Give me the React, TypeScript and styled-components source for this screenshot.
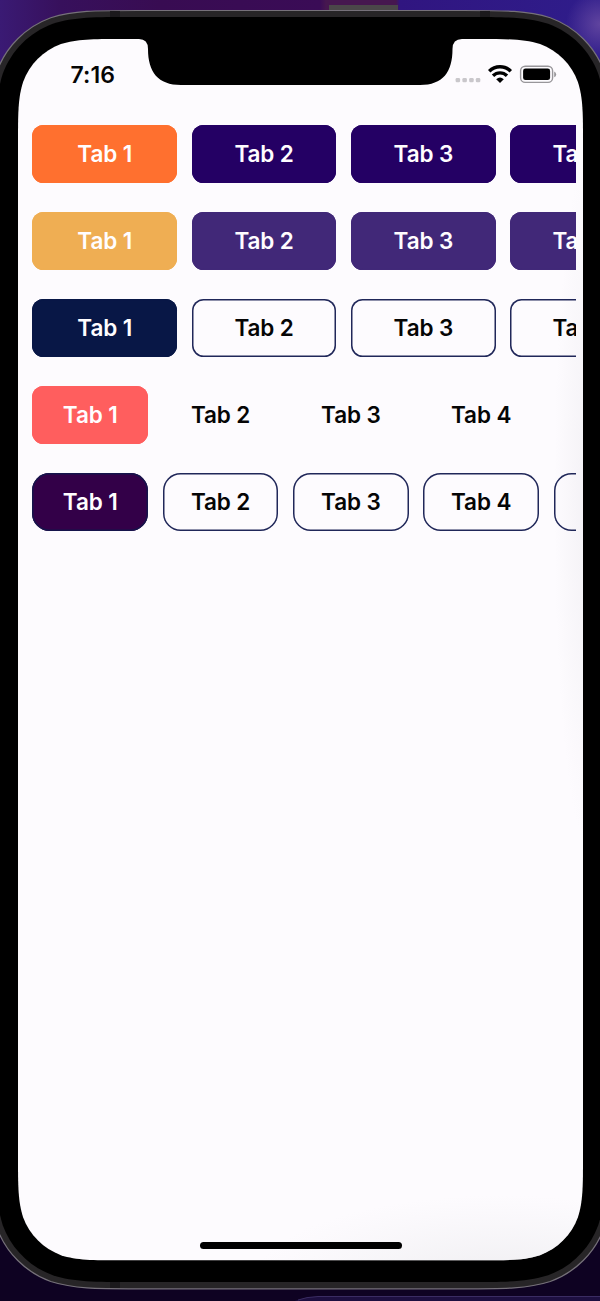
import React from "react";
import styled, { createGlobalStyle } from "styled-components";

const GlobalStyle = createGlobalStyle`
  * { box-sizing: border-box; }
  body { margin: 0; background: #0e0222; }
  button { font: inherit; }
`;

const Desktop = styled.main`
  position: relative;
  width: 600px;
  height: 1301px;
  overflow: hidden;
  padding: 39px 17px 0 18px;
  background:
    linear-gradient(#0e0222, #0e0222) 0 1150px / 100% 151px no-repeat,
    radial-gradient(circle at 600px 24px, #60449f 0, rgba(67, 41, 143, 0) 34px),
    linear-gradient(90deg, #3a1a74 0, #37105c 60px, #380c52 160px, #3a0c56 320px, #46174f 326px, #46174f 396px, #301580 400px, #2f1d8b 600px);
  font-family: Inter, "Liberation Sans", sans-serif;
`;

const Device = styled.svg`
  position: absolute;
  inset: 0;
  width: 600px;
  height: 1301px;
`;

const Screen = styled.section`
  position: relative;
  display: flex;
  flex-direction: column;
  height: 1221px;
`;

const StatusBar = styled.header`
  display: flex;
  align-items: center;
  justify-content: space-between;
  height: 46px;
  padding: 25px 26px 0 52.5px;
  flex: none;
`;

const Clock = styled.time`
  font-size: 23px;
  line-height: 24px;
  font-weight: 600;
  letter-spacing: 0.1px;
  color: #050505;
`;

const StatusIcons = styled.svg`
  width: 102px;
  height: 22px;
  flex: none;
`;

const TabRows = styled.div`
  display: flex;
  flex-direction: column;
  gap: 29px;
  padding: 40.4px 7.5px 0 14.4px;
`;

const Row = styled.nav`
  display: flex;
  gap: 14.5px;
  overflow: hidden;
  height: 58px;
`;

type Look = {
  $width: number;
  $fill: string;
  $ink: string;
  $border: string;
  $radius: number;
};

const Tab = styled.button<Look>`
  flex: none;
  width: ${(p) => p.$width}px;
  height: 58px;
  padding: 0;
  border: 0;
  box-shadow: inset 0 0 0 1.5px ${(p) => p.$border};
  border-radius: ${(p) => p.$radius}px;
  background: ${(p) => p.$fill};
  color: ${(p) => p.$ink};
  font-size: 22.5px;
  font-weight: 600;
  line-height: 28px;
  letter-spacing: -0.1px;
  white-space: nowrap;
`;

const HomeIndicator = styled.div`
  width: 202px;
  height: 7px;
  margin: auto auto 11px;
  border-radius: 4px;
  background: #000;
`;

// Continuous-curvature rounded rectangle.
function squircle(x0: number, y0: number, x1: number, y1: number, r: number) {
  const pts = [
    [1.52866, 0], [1.08849, 0], [0.8684, 0], [0.63149, 0.07491],
    [0.37282, 0.16905], [0.16905, 0.37282], [0.07491, 0.63149],
    [0, 0.8684], [0, 1.08849], [0, 1.52866],
  ];
  const corner = (cx: number, cy: number, sx: number, sy: number, reverse: boolean) => {
    const list = reverse ? [...pts].reverse() : pts;
    const p = list.map(([a, b]) => `${(cx + sx * a * r).toFixed(2)} ${(cy + sy * b * r).toFixed(2)}`);
    return `${p[0]} C${p.slice(1, 4).join(" ")} C${p.slice(4, 7).join(" ")} C${p.slice(7).join(" ")}`;
  };
  return `M${corner(x0, y0, 1, 1, true)} L${corner(x1, y0, -1, 1, false)} L${corner(x1, y1, -1, -1, true)} L${corner(x0, y1, 1, -1, false)} Z`;
}

function PhoneShell() {
  return (
    <Device viewBox="0 0 600 1301" aria-hidden="true">
      <defs>
        <radialGradient id="edge">
          <stop offset="0" stopColor="#f3f1f5" />
          <stop offset="1" stopColor="#f3f1f5" stopOpacity="0" />
        </radialGradient>
        <radialGradient id="foot">
          <stop offset="0" stopColor="#eeedf0" />
          <stop offset="1" stopColor="#f2f1f4" stopOpacity="0" />
        </radialGradient>
        <clipPath id="display">
          <path d={squircle(18, 39, 583, 1260.3, 68)} />
        </clipPath>
      </defs>
      <path d="M329 5 H398 V11 H329 Z" fill="#4b4749" />
      <path d="M292 1302 Q304 1297 318 1296.5 H600 V1301 H292Z" fill="#1d0f40" />
      <path d="M298 1300 Q306 1297 318 1296.5 H600" fill="none" stroke="#3a2c62" />
      <path d={squircle(-10.5, 10.5, 611.5, 1288.8, 97)} fill="#272527" stroke="#76717a" strokeWidth="1.2" />
      <path d="M110 11 h10 v6 h-10z M480 11 h10 v6 h-10z M110 1282 h10 v6 h-10z" fill="#1b191c" />
      <path d={squircle(-4, 17, 605, 1282, 90)} fill="#000" />
      <g clipPath="url(#display)">
        <rect x="18" y="39" width="565" height="1222" fill="#fdfbfe" />
        <ellipse cx="590" cy="500" rx="36" ry="350" fill="url(#edge)" />
        <ellipse cx="500" cy="1285" rx="250" ry="90" fill="url(#foot)" />
      </g>
      <path d="M139 38 V39 Q148 39 148 49 C148 72 158 85 181 85 H420 C443 85 452.5 72 452.5 49 Q452.5 39 462 39 V38 Z" fill="#000" />
    </Device>
  );
}

function SystemIcons() {
  return (
    <StatusIcons viewBox="0 0 102 22" aria-label="Wi-Fi and battery">
      <g fill="#c9c7cb">
        <rect x="0.6" y="13.9" width="4.5" height="4.3" rx="1.3" />
        <rect x="7.4" y="13.9" width="4.5" height="4.3" rx="1.3" />
        <rect x="14.2" y="13.9" width="4.5" height="4.3" rx="1.3" />
        <rect x="20.8" y="13.9" width="4.5" height="4.3" rx="1.3" />
      </g>
      <g fill="none" stroke="#000" strokeWidth="3.4">
        <path d="M34.2 7.3 C40.2 1.2 49.8 1.2 55.8 7.3" />
        <path d="M38 11.8 C42 7.9 48 7.9 52 11.8" />
      </g>
      <path d="M41.2 15.2 Q45 12 48.8 15.2 L45 19 Z" fill="#000" />
      <rect x="65.6" y="2.2" width="32" height="16.2" rx="4.6" fill="none" stroke="#98969a" strokeWidth="1.4" />
      <rect x="68.1" y="4.5" width="27" height="11.6" rx="2.4" fill="#000" />
      <path d="M99.2 7.5 Q101.2 8.4 101.2 10.4 Q101.2 12.4 99.2 13.2Z" fill="#98969a" />
    </StatusIcons>
  );
}

type RowTheme = {
  width: number;
  radius: number;
  active: string;
  activeBorder?: string;
  fill: string;
  border?: string;
  ink: string;
};

const rows: RowTheme[] = [
  { width: 144.8, radius: 11.5, active: "#ff702f", fill: "#240064", ink: "#fffdff" },
  { width: 144.8, radius: 11.5, active: "#efae53", fill: "#412878", ink: "#fffdff" },
  { width: 144.8, radius: 11.5, active: "#081746", fill: "transparent", border: "#202759", ink: "#050505" },
  { width: 115.8, radius: 11.5, active: "#ff5e5e", fill: "transparent", ink: "#050505" },
  { width: 115.8, radius: 17.5, active: "#330048", activeBorder: "#15144b", fill: "transparent", border: "#202759", ink: "#050505" },
];

export default function App() {
  return (
    <>
      <GlobalStyle />
      <Desktop>
        <PhoneShell />
        <Screen>
          <StatusBar>
            <Clock>7:16</Clock>
            <SystemIcons />
          </StatusBar>
          <TabRows>
            {rows.map((row, i) => (
              <Row key={i}>
                {(row.width > 120 ? [1, 2, 3, 4] : [1, 2, 3, 4, 5]).map((n) => (
                  <Tab
                    key={n}
                    $width={row.width}
                    $radius={row.radius}
                    $fill={n === 1 ? row.active : row.fill}
                    $border={n === 1 ? row.activeBorder ?? row.active : row.border ?? row.fill}
                    $ink={n === 1 ? "#fffdff" : row.ink}
                  >
                    {/* the fifth tab lies past the visible end of the strip */}
                    {n < 5 && `Tab ${n}`}
                  </Tab>
                ))}
              </Row>
            ))}
          </TabRows>
          <HomeIndicator />
        </Screen>
      </Desktop>
    </>
  );
}
